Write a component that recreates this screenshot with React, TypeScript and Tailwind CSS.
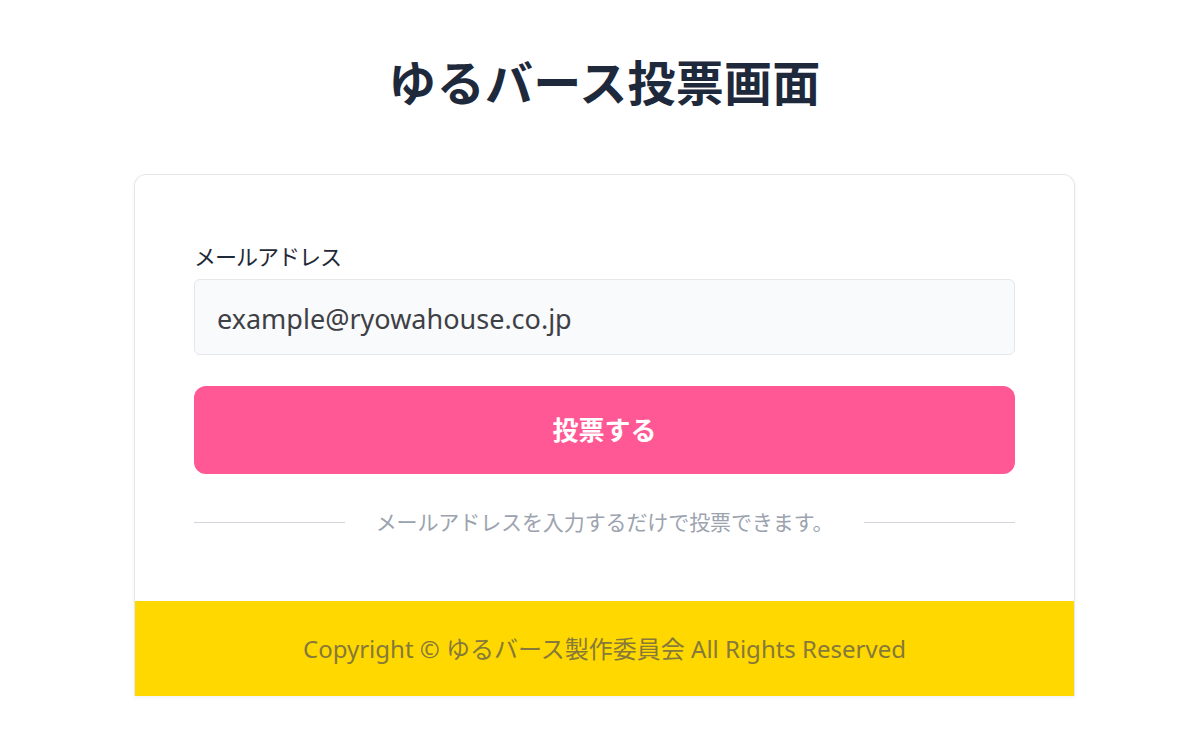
import { useState } from 'react'

const jp = { fontFamily: '"Noto Sans", "Noto Sans CJK JP", sans-serif' }

export default function App() {
  const [email, setEmail] = useState('example@ryowahouse.co.jp')

  return (
    <div className="min-h-screen bg-white" style={jp}>
      <div className="flex flex-col items-center pl-[9px]">
        <h1 className="mt-[56px] text-[48px] font-bold leading-[54px] text-[#1e293b] tracking-[0.3px]">
          ゆるバース投票画面
        </h1>

        <div className="mt-[64px] w-[941px] overflow-hidden rounded-t-[12px] border border-b-0 border-[#e5e7eb] bg-white shadow-[0_2px_4px_rgba(0,0,0,0.05)]">
          <form
            className="px-[59px] pt-[64px] pb-[65px]"
            onSubmit={(e) => e.preventDefault()}
          >
            <label className="block text-[22px] leading-[34px] text-[#1f2937] tracking-[-1px]">
              メールアドレス
            </label>
            <input
              type="email"
              value={email}
              onChange={(e) => setEmail(e.target.value)}
              className="mt-[6px] block h-[76px] w-full rounded-[6px] border border-[#e5e7eb] bg-[#f9fafb] px-[22px] pt-[2px] text-[27px] text-[#3f3f46] outline-none"
            />
            <button
              type="submit"
              className="mt-[31px] flex h-[88px] w-full items-center justify-center rounded-[12px] bg-[#ff5894] text-[26px] font-bold text-white"
            >
              投票する
            </button>

            {/* divider with hint text */}
            <div className="mt-[34px] flex items-center gap-[31px]">
              <div className="h-px flex-1 bg-[#d1d5db]" />
              <span className="text-[21px] leading-[28px] text-[#9ca3af] tracking-[-0.1px]">
                メールアドレスを入力するだけで投票できます。
              </span>
              <div className="h-px flex-1 bg-[#d1d5db]" />
            </div>
          </form>

          <footer className="flex h-[95px] items-center justify-center bg-[#ffd800] text-[24px] text-[#86793a]">
            Copyright © ゆるバース製作委員会 All Rights Reserved
          </footer>
        </div>
      </div>
    </div>
  )
}
